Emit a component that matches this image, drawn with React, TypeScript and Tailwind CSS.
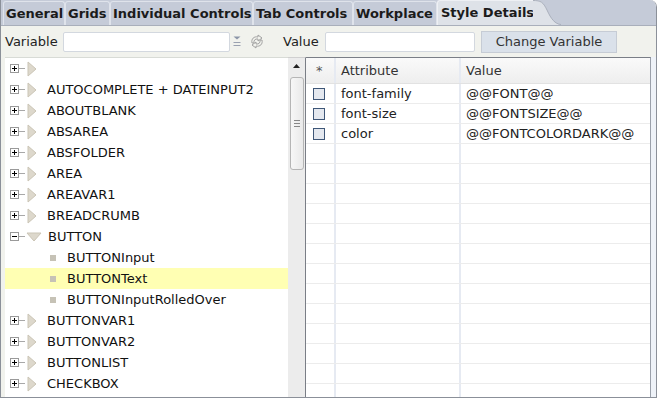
import React from 'react';

type Node = { label: string; kind: 'closed' | 'open' | 'leaf'; selected?: boolean };

const treeNodes: Node[] = [
  { label: '', kind: 'closed' },
  { label: 'AUTOCOMPLETE + DATEINPUT2', kind: 'closed' },
  { label: 'ABOUTBLANK', kind: 'closed' },
  { label: 'ABSAREA', kind: 'closed' },
  { label: 'ABSFOLDER', kind: 'closed' },
  { label: 'AREA', kind: 'closed' },
  { label: 'AREAVAR1', kind: 'closed' },
  { label: 'BREADCRUMB', kind: 'closed' },
  { label: 'BUTTON', kind: 'open' },
  { label: 'BUTTONInput', kind: 'leaf' },
  { label: 'BUTTONText', kind: 'leaf', selected: true },
  { label: 'BUTTONInputRolledOver', kind: 'leaf' },
  { label: 'BUTTONVAR1', kind: 'closed' },
  { label: 'BUTTONVAR2', kind: 'closed' },
  { label: 'BUTTONLIST', kind: 'closed' },
  { label: 'CHECKBOX', kind: 'closed' },
];

const attributes = [
  { name: 'font-family', value: '@@FONT@@' },
  { name: 'font-size', value: '@@FONTSIZE@@' },
  { name: 'color', value: '@@FONTCOLORDARK@@' },
];

const tabs = [
  { label: 'General', w: 'w-[62px]' },
  { label: 'Grids', w: 'w-[45px]' },
  { label: 'Individual Controls', w: 'w-[143px]' },
  { label: 'Tab Controls', w: 'w-[100px]' },
  { label: 'Workplace', w: 'w-[84px]' },
];

const ExpandBox = ({ open }: { open: boolean }) => (
  <div className="flex items-center">
    <div className="w-[9px] h-[9px] border border-[#9a9a9a] bg-white relative">
      <div className="absolute left-[1px] top-[3px] w-[5px] h-px bg-black" />
      {!open && <div className="absolute left-[3px] top-[1px] w-px h-[5px] bg-black" />}
    </div>
    <div className="w-[6px] h-px bg-[#a8a8a8]" />
  </div>
);

const TreeRow = ({ node }: { node: Node }) => {
  if (node.kind === 'leaf') {
    return (
      <div className={`h-[21px] flex items-center pl-[45px] ${node.selected ? 'bg-[#ffffb3]' : ''}`}>
        <div className="w-[6px] h-[6px] bg-[#c6c2b6]" />
        <span className="ml-[11px] whitespace-nowrap">{node.label}</span>
      </div>
    );
  }
  return (
    <div className="h-[21px] flex items-center pl-[5px]">
      <ExpandBox open={node.kind === 'open'} />
      {node.kind === 'closed' ? (
        <svg width="10" height="16" viewBox="0 0 10 16" className="ml-[2px]">
          <path d="M1 1 L9 8 L1 15 Z" fill="#ddd8cc" stroke="#cbc5b6" strokeWidth="1" />
        </svg>
      ) : (
        <svg width="16" height="10" viewBox="0 0 16 10" className="ml-[1px]">
          <path d="M1 1 L15 1 L8 9 Z" fill="#ddd8cc" stroke="#cbc5b6" strokeWidth="1" />
        </svg>
      )}
      <span className={`${node.kind === 'closed' ? 'ml-[10px]' : 'ml-[6px]'} whitespace-nowrap`}>{node.label}</span>
    </div>
  );
};

export default function App() {
  return (
    <div className="w-[657px] h-[398px] overflow-hidden bg-white font-['DejaVu_Sans',sans-serif] text-[13px] text-[#111]">
      <div className="w-[657px] h-[398px] flex flex-col border-r border-b border-l border-[#8b9099] rounded-tr-[7px] overflow-hidden">
        {/* tab strip */}
        <div className="h-[26px] shrink-0 bg-[#c5cbd8] flex items-end pl-[2px] border-b border-[#a9afbb]">
          {tabs.map((t) => (
            <div
              key={t.label}
              className={`${t.w} h-[24px] border-t border-l border-r border-[#dfe3eb] rounded-t-[3px] pl-[2px] flex items-center font-bold text-[#1b1b1b] whitespace-nowrap`}
            >
              {t.label}
            </div>
          ))}
          <div className="flex items-end h-[25px]">
            <div className="h-[25px] w-[96px] bg-[#dee2e8] border-t border-l border-[#eef0f4] rounded-tl-[3px] pl-[3px] flex items-center font-bold text-[#1b1b1b] whitespace-nowrap">
              Style Details
            </div>
            <svg width="28" height="25" viewBox="0 0 28 25" className="block">
              <path d="M0 0 C8 0 10 2 14 10 C18 19 22 24 28 25 L0 25 Z" fill="#dee2e8" />
              <path d="M0 0.5 C8 0.5 10 2 14 10 C18 19 22 24 28 24.5" fill="none" stroke="#aab0bc" strokeWidth="1" />
            </svg>
          </div>
        </div>

        {/* variable row */}
        <div className="h-[31px] shrink-0 bg-[#f1f2ed] flex items-center text-[#222]">
          <span className="ml-[4px] w-[54px]">Variable</span>
          <div className="ml-[4px] w-[167px] h-[20px] bg-white border border-[#d3d8df] rounded-[2px]" />
          <svg width="8" height="12" viewBox="0 0 8 12" className="ml-[3px]">
            <path d="M0.5 0.5 L7.5 0.5 L4 3.5 Z" fill="#8c95a8" />
            <path d="M0.5 6.5 H7.5 M0.5 9.5 H7.5" stroke="#9aa1b0" strokeWidth="1" />
          </svg>
          <svg width="16" height="15" viewBox="0 0 16 15" className="ml-[8px]">
            <path d="M3 9 C2 5 5 2 9 3 L9 1 L13 4 L9 7 L9 5 C6 4.5 4.5 6.5 5 9 Z" fill="none" stroke="#a2a2a2" strokeWidth="1" strokeLinejoin="round" />
            <path d="M13 6 C14 10 11 13 7 12 L7 14 L3 11 L7 8 L7 10 C10 10.5 11.5 8.5 11 6 Z" fill="none" stroke="#a2a2a2" strokeWidth="1" strokeLinejoin="round" />
          </svg>
          <span className="ml-[18px] w-[38px]">Value</span>
          <div className="ml-[4px] w-[150px] h-[20px] bg-white border border-[#d3d8df] rounded-[2px]" />
          <div className="ml-[6px] w-[136px] h-[22px] bg-[#dae1ea] border border-[#c6ccd5] flex items-center justify-center text-[#333]">
            Change Variable
          </div>
        </div>

        {/* main */}
        <div className="flex-1 flex bg-[#f1f2ed] min-h-0">
          <div className="w-[4px] shrink-0" />
          <div className="w-[283px] shrink-0 bg-white border-t border-[#d8dbd6] overflow-hidden">
            {treeNodes.map((n, i) => (
              <TreeRow key={i} node={n} />
            ))}
          </div>
          {/* scrollbar */}
          <div className="w-[18px] shrink-0 bg-[#ececec] border-t border-[#d0d0d0] border-r border-r-[#7a7e86] flex flex-col items-center relative">
            <svg width="7" height="4" viewBox="0 0 7 4" className="mt-[6px]">
              <path d="M0 4 L3.5 0 L7 4 Z" fill="#222" />
            </svg>
            <div className="mt-[9px] w-[14px] h-[93px] rounded-[3px] border border-[#b5b5b5] bg-gradient-to-r from-[#f7f7f7] to-[#e9e9e9] flex flex-col items-center justify-center gap-[2px]">
              <div className="w-[6px] h-px bg-[#888]" />
              <div className="w-[6px] h-px bg-[#888]" />
              <div className="w-[6px] h-px bg-[#888]" />
            </div>
          </div>
          {/* table */}
          <div className="w-[345px] shrink-0 bg-white border-t border-[#7a7e86] border-r border-r-[#9aa0aa] overflow-hidden">
            <div className="h-[26px] flex bg-gradient-to-b from-[#fafafa] to-[#eeeeee] border-b border-[#e2e2e2] text-[#333]">
              <div className="w-[30px] border-r-2 border-[#e6eaf2] pl-[10px] flex items-center text-[#555]">*</div>
              <div className="w-[125px] border-r-2 border-[#e6eaf2] pl-[5px] flex items-center">Attribute</div>
              <div className="flex-1 pl-[5px] flex items-center">Value</div>
            </div>
            {Array.from({ length: 16 }).map((_, i) => {
              const a = attributes[i];
              return (
                <div key={i} className="h-[20px] flex border-b border-[#ececec] text-[#222]">
                  <div className="w-[30px] border-r-2 border-[#e6eaf2] pl-[7px] flex items-center">
                    {a && <div className="w-[12px] h-[12px] border border-[#3e5677] bg-[#e4e8ef]" />}
                  </div>
                  <div className="w-[125px] border-r-2 border-[#e6eaf2] pl-[5px] flex items-center whitespace-nowrap">
                    {a?.name}
                  </div>
                  <div className="flex-1 pl-[5px] flex items-center whitespace-nowrap">{a?.value}</div>
                </div>
              );
            })}
          </div>
          <div className="flex-1 bg-[#eef2f8]" />
        </div>
      </div>
    </div>
  );
}
